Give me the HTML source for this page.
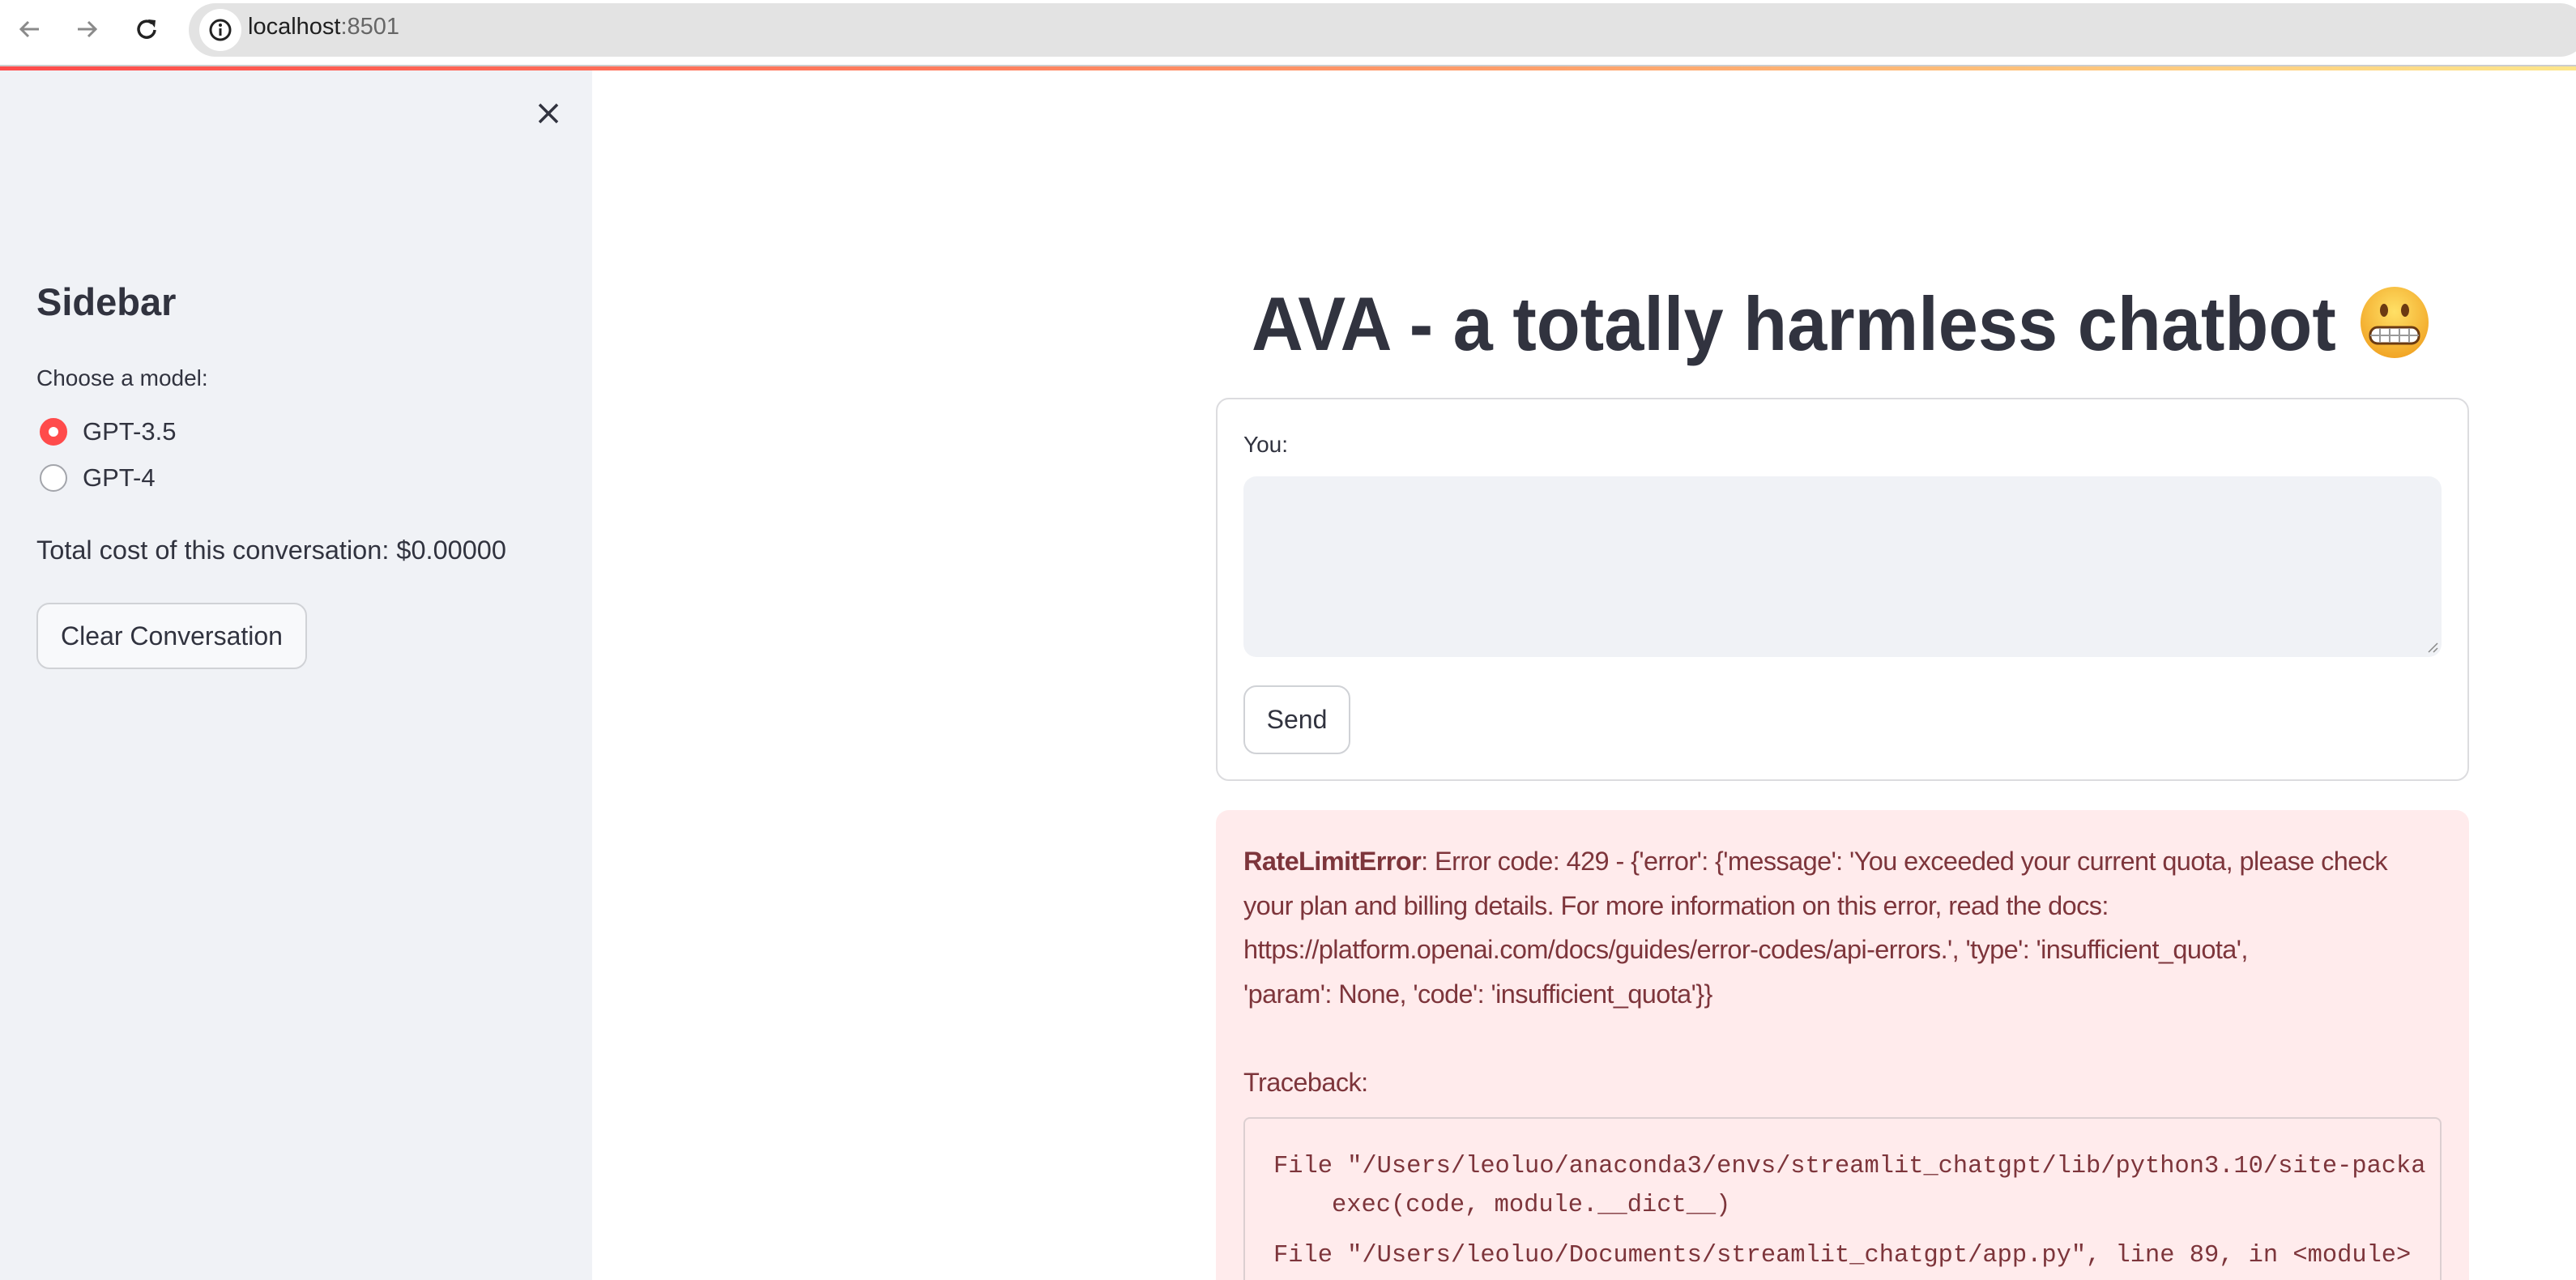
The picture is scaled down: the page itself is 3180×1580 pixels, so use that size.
<!DOCTYPE html>
<html><head><meta charset="utf-8"><style>
*{box-sizing:border-box;margin:0;padding:0}
html,body{width:3180px;height:1580px;overflow:hidden;background:#fff;font-family:"Liberation Sans",sans-serif;color:#31333f}
.abs{position:absolute}
.top{left:0;top:0;width:3180px;height:80px;background:#fff}
.pill{left:233px;top:4px;width:2960px;height:66px;border-radius:33px;background:#e3e3e3}
.info{left:246px;top:11px;width:52px;height:52px;border-radius:50%;background:#fff}
.grey{left:0;top:80px;width:3180px;height:3px;background:#ccc}
.deco{left:0;top:82px;width:3180px;height:5px;background:linear-gradient(90deg,#ff4b4b,#ffa06a 60%,#fde68a)}
.side{left:0;top:87px;width:731px;height:1493px;background:#f0f2f6}
.t{white-space:nowrap}
.radio{width:34px;height:34px;border-radius:50%}
.btn{border:2px solid #d0d2d6;border-radius:16px;background:#f8f9fb;font-size:32px;display:flex;align-items:center;justify-content:center}
.form{left:1501px;top:491px;width:1547px;height:473px;border:2px solid #dcdcdf;border-radius:16px}
.ta{left:1535px;top:588px;width:1479px;height:223px;background:#f0f2f6;border-radius:16px}
.err{left:1501px;top:1000px;width:1547px;height:580px;background:#ffebec;border-radius:16px 16px 0 0;color:#7d353b}
.et{font-size:32.5px;line-height:54.5px;letter-spacing:-0.6px}
.code{left:1535px;top:1379px;width:1479px;height:201px;border:2px solid #dccfd1;border-bottom:none;border-radius:8px 8px 0 0;overflow:hidden;font-family:"Liberation Mono",monospace;font-size:30.4px;color:#7d353b}
</style></head><body>
<div class="abs top"></div>
<svg class="abs" style="left:18px;top:18px" width="200" height="36" viewBox="0 0 200 36">
<path d="M30 18H8M17 9l-9 9 9 9" stroke="#8a8a8a" stroke-width="3" fill="none"/>
<path d="M78 18h22M91 9l9 9-9 9" stroke="#8a8a8a" stroke-width="3" fill="none"/>
<path d="M170 11a10 10 0 1 0 3 8" stroke="#222" stroke-width="3.5" fill="none"/><path d="M165 6l9 1-1 9z" fill="#222"/>
</svg>
<div class="abs pill"></div>
<div class="abs info"></div>
<svg class="abs" style="left:257px;top:22px" width="30" height="30" viewBox="0 0 30 30"><circle cx="15" cy="15" r="12" stroke="#222" stroke-width="3" fill="none"/><rect x="13.5" y="13" width="3" height="9" fill="#222"/><circle cx="15" cy="9" r="2" fill="#222"/></svg>
<div class="abs t" style="left:306px;top:17px;font-size:29px;color:#1f1f1f">localhost<span style="color:#666">:8501</span></div>
<div class="abs grey"></div>
<div class="abs deco"></div>
<div class="abs side"></div>
<svg class="abs" style="left:663px;top:126px" width="28" height="28" viewBox="0 0 28 28"><path d="M3 3L25 25M25 3L3 25" stroke="#31333f" stroke-width="3.5"/></svg>
<div class="abs t" style="left:45px;top:345px;font-size:47px;font-weight:bold">Sidebar</div>
<div class="abs t" style="left:45px;top:451px;font-size:28px">Choose a model:</div>
<div class="abs radio" style="left:49px;top:516px;border:11px solid #ff4b4b;background:#fff"></div>
<div class="abs t" style="left:102px;top:515px;font-size:31px">GPT-3.5</div>
<div class="abs radio" style="left:49px;top:573px;border:2px solid #a3a5ab;background:#fff"></div>
<div class="abs t" style="left:102px;top:572px;font-size:31px">GPT-4</div>
<div class="abs t" style="left:45px;top:661px;font-size:32.5px">Total cost of this conversation: $0.00000</div>
<div class="abs btn" style="left:45px;top:744px;width:334px;height:82px"><span>Clear Conversation</span></div>
<div class="abs t" style="left:1545px;top:345px;width:1460px;font-size:94px;font-weight:bold;line-height:110px"><span style="display:inline-block;transform:scaleX(.94);transform-origin:left">AVA - a totally harmless chatbot</span></div>
<svg class="abs" style="left:2910px;top:352px" width="92" height="92" viewBox="0 0 92 92"><defs><radialGradient id="g" cx=".5" cy=".35" r=".7"><stop offset="0" stop-color="#ffe066"/><stop offset="1" stop-color="#f0a020"/></radialGradient></defs><ellipse cx="46" cy="46" rx="42" ry="44" fill="url(#g)"/><ellipse cx="33" cy="31" rx="5" ry="8" fill="#6b3a12"/><ellipse cx="59" cy="31" rx="5" ry="8" fill="#6b3a12"/><rect x="16" y="52" width="60" height="20" rx="9" fill="#fff" stroke="#6b3a12" stroke-width="3"/><path d="M16 62h60M28 53v18M40 53v18M52 53v18M64 53v18" stroke="#999" stroke-width="2"/></svg>
<div class="abs form"></div>
<div class="abs t" style="left:1535px;top:533px;font-size:28px">You:</div>
<div class="abs ta"></div>
<svg class="abs" style="left:2996px;top:792px" width="14" height="14"><path d="M2 13L13 2M8 13L13 8" stroke="#888" stroke-width="1.5"/></svg>
<div class="abs btn" style="left:1535px;top:846px;width:132px;height:85px;background:#fff"><span>Send</span></div>
<div class="abs err"></div>
<div class="abs et" style="left:1535px;top:1036px;width:1520px;color:#7d353b">
<div class="t"><b>RateLimitError</b>: Error code: 429 - {'error': {'message': 'You exceeded your current quota, please check</div>
<div class="t">your plan and billing details. For more information on this error, read the docs:</div>
<div class="t">https://platform.openai.com/docs/guides/error-codes/api-errors.', 'type': 'insufficient_quota',</div>
<div class="t">'param': None, 'code': 'insufficient_quota'}}</div>
</div>
<div class="abs t et" style="left:1535px;top:1309px;color:#7d353b">Traceback:</div>
<div class="abs code">
<div class="abs t" style="left:35px;top:42px">File "/Users/leoluo/anaconda3/envs/streamlit_chatgpt/lib/python3.10/site-packa</div>
<div class="abs t" style="left:107px;top:90px">exec(code, module.__dict__)</div>
<div class="abs t" style="left:35px;top:152px">File "/Users/leoluo/Documents/streamlit_chatgpt/app.py", line 89, in &lt;module&gt;</div>
</div>
</body></html>
